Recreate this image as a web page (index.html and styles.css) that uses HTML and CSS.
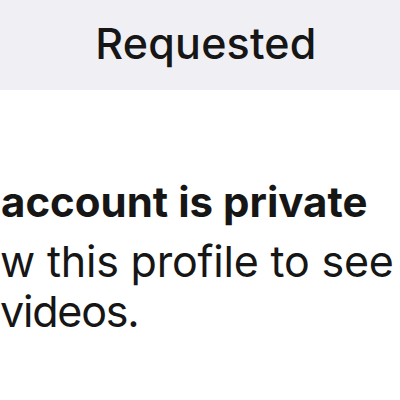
FILE: index.html
```html
<!DOCTYPE html>
<html>
<head>
<meta charset="utf-8">
<link rel="stylesheet" href="styles.css">
</head>
<body>
<div class="button"><span class="button-label">Requested</span></div>
<div class="message">
  <div class="title">account is private</div>
  <div class="body line-2">w this profile to see</div>
  <div class="body line-3">videos.</div>
</div>
</body>
</html>
```
FILE: styles.css
```css
html, body {
  margin: 0;
  padding: 0;
  background: #ffffff;
}
body {
  width: 400px;
  height: 400px;
  overflow: hidden;
  font-family: Inter, "Noto Sans", sans-serif;
  color: #161616;
}
.button {
  height: 90px;
  background: #f0f0f4;
  display: flex;
  align-items: center;
  justify-content: center;
  padding-left: 12px;
  padding-bottom: 3px;
  box-sizing: border-box;
}
.button-label {
  font-size: 43px;
  font-weight: 500;
  line-height: 1;
  letter-spacing: 0.2px;
}
.message {
  padding-top: 87px;
  white-space: nowrap;
}
.title {
  font-size: 42px;
  font-weight: 700;
  line-height: 50px;
  padding-left: 1px;
}
.body {
  font-size: 43px;
  font-weight: 400;
  line-height: 50px;
}
.line-2 {
  margin-top: 9px;
  letter-spacing: -0.2px;
}
.line-3 {
  letter-spacing: -1.2px;
}
```
